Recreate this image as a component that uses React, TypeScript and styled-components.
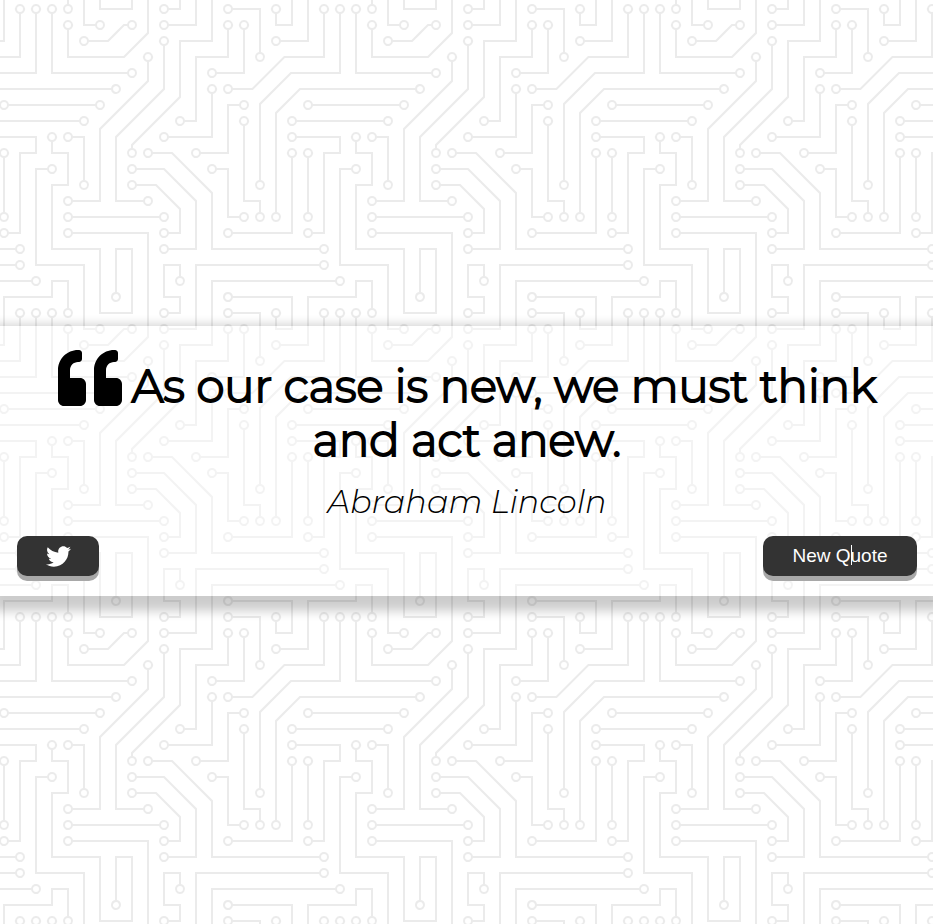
import React from "react";
import styled, { createGlobalStyle } from "styled-components";

const TRACES =
  "M44.1 224a5 5 0 1 1 0 2H0v-2h44.1zm160 48a5 5 0 1 1 0 2H82v-2h122.1zm57.8-46a5 5 0 1 1 0-2H304v2h-42.1zm0 16a5 5 0 1 1 0-2H304v2h-42.1zm6.2-114a5 5 0 1 1 0 2h-86.2a5 5 0 1 1 0-2h86.2zm-256-48a5 5 0 1 1 0 2H0v-2h12.1zm185.8 34a5 5 0 1 1 0-2h86.2a5 5 0 1 1 0 2h-86.2zM258 12.1a5 5 0 1 1-2 0V0h2v12.1zm-64 208a5 5 0 1 1-2 0v-54.2a5 5 0 1 1 2 0v54.2zm48-198.2V80h62v2h-64V21.9a5 5 0 1 1 2 0zm16 16V64h46v2h-48V37.9a5 5 0 1 1 2 0zm-128 96V208h16v12.1a5 5 0 1 1-2 0V210h-16v-76.1a5 5 0 1 1 2 0zm-5.9-21.9a5 5 0 1 1 0 2H114v48H85.9a5 5 0 1 1 0-2H112v-48h12.1zm-6.2 130a5 5 0 1 1 0-2H176v-74.1a5 5 0 1 1 2 0V242h-60.1zm-16-64a5 5 0 1 1 0-2H114v48h10.1a5 5 0 1 1 0 2H112v-48h-10.1zM66 284.1a5 5 0 1 1-2 0V274H50v30h-2v-32h18v12.1zM236.1 176a5 5 0 1 1 0 2H226v94h48v32h-2v-30h-48v-98h12.1zm25.8-30a5 5 0 1 1 0-2H274v44.1a5 5 0 1 1-2 0V146h-10.1zm-64 96a5 5 0 1 1 0-2H208v-80h16v-14h-42.1a5 5 0 1 1 0-2H226v18h-16v80h-12.1zm86.2-210a5 5 0 1 1 0 2H272V0h2v32h10.1zM98 101.9V146H53.9a5 5 0 1 1 0-2H96v-42.1a5 5 0 1 1 2 0zM53.9 34a5 5 0 1 1 0-2H80V0h2v34H53.9zm60.1 3.9V66H82v64H69.9a5 5 0 1 1 0-2H80V64h32V37.9a5 5 0 1 1 2 0zM101.9 82a5 5 0 1 1 0-2H128V37.9a5 5 0 1 1 2 0V82h-28.1zm16-64a5 5 0 1 1 0-2H146v44.1a5 5 0 1 1-2 0V18h-26.1zm102.2 270a5 5 0 1 1 0 2H98v14h-2v-16h124.1zM242 149.9V160h16v34h-16v62h48v48h-2v-46h-48v-66h16v-30h-16v-12.1a5 5 0 1 1 2 0zM53.9 18a5 5 0 1 1 0-2H64V2H48V0h18v18H53.9zm112 32a5 5 0 1 1 0-2H192V0h50v2h-48v48h-28.1zm-48-48a5 5 0 0 1-9.8-2h2.07a3 3 0 1 0 5.66 0H178v34h-18V21.9a5 5 0 1 1 2 0V32h14V2h-58.1zm0 96a5 5 0 1 1 0-2H137l32-32h39V21.9a5 5 0 1 1 2 0V66h-40.17l-32 32H117.9zm28.1 90.1a5 5 0 1 1-2 0v-76.51L175.59 80H224V21.9a5 5 0 1 1 2 0V82h-49.59L146 112.41v75.69zm16 32a5 5 0 1 1-2 0v-99.51L184.59 96H300.1a5 5 0 0 1 3.9-3.9v2.07a3 3 0 0 0 0 5.66v2.07a5 5 0 0 1-3.9-3.9H185.41L162 121.41v98.69zm-144-64a5 5 0 1 1-2 0v-3.51l48-48V48h32V0h2v50H66v55.41l-48 48v2.69zM50 53.9v43.51l-48 48V208h26.1a5 5 0 1 1 0 2H0v-65.41l48-48V53.9a5 5 0 1 1 2 0zm-16 16V89.41l-34 34v-2.82l32-32V69.9a5 5 0 1 1 2 0zM12.1 32a5 5 0 1 1 0 2H9.41L0 43.41V40.6L8.59 32h3.51zm265.8 18a5 5 0 1 1 0-2h18.69l7.41-7.41v2.82L297.41 50H277.9zm-16 160a5 5 0 1 1 0-2H288v-71.41l16-16v2.82l-14 14V210h-28.1zm-208 32a5 5 0 1 1 0-2H64v-22.59L40.59 194H21.9a5 5 0 1 1 0-2H41.41L66 216.59V242H53.9zm150.2 14a5 5 0 1 1 0 2H96v-56.6L56.6 162H37.9a5 5 0 1 1 0-2h19.5L98 200.6V256h106.1zm-150.2 2a5 5 0 1 1 0-2H80v-46.59L48.59 178H21.9a5 5 0 1 1 0-2H49.41L82 208.59V258H53.9zM34 39.8v1.61L9.41 66H0v-2h8.59L32 40.59V0h2v39.8zM2 300.1a5 5 0 0 1 3.9 3.9H3.83A3 3 0 0 0 0 302.17V256h18v48h-2v-46H2v42.1zM34 241v63h-2v-62H0v-2h34v1zM17 18H0v-2h16V0h2v18h-1zm273-2h14v2h-16V0h2v16zm-32 273v15h-2v-14h-14v14h-2v-16h18v1zM0 92.1A5.02 5.02 0 0 1 6 97a5 5 0 0 1-6 4.9v-2.07a3 3 0 1 0 0-5.66V92.1zM80 272h2v32h-2v-32zm37.9 32h-2.07a3 3 0 0 0-5.66 0h-2.07a5 5 0 0 1 9.8 0zM5.9 0A5.02 5.02 0 0 1 0 5.9V3.83A3 3 0 0 0 3.83 0H5.9zm294.2 0h2.07A3 3 0 0 0 304 3.83V5.9a5 5 0 0 1-3.9-5.9zm3.9 300.1v2.07a3 3 0 0 0-1.83 1.83h-2.07a5 5 0 0 1 3.9-3.9z";

// Centres of the solder pads; each one is punched out of the trace shape.
const PADS: Array<[number, number]> = [
  [49, 225], [209, 273], [257, 225], [257, 241], [273, 129], [177, 129], [17, 81],
  [193, 113], [289, 113], [257, 17], [193, 225], [193, 161], [241, 17], [257, 33],
  [129, 129], [145, 225], [129, 113], [81, 161], [113, 241], [177, 161], [97, 177],
  [129, 225], [65, 289], [241, 177], [257, 145], [273, 193], [193, 241], [177, 145],
  [289, 33], [97, 97], [49, 145], [49, 33], [113, 33], [65, 129], [97, 81], [129, 33],
  [113, 17], [145, 65], [225, 289], [241, 145], [49, 17], [161, 49], [161, 17],
  [113, 97], [209, 17], [145, 193], [225, 17], [161, 225], [17, 161], [49, 49],
  [33, 209], [33, 65], [17, 33], [273, 49], [257, 209], [49, 241], [17, 193],
  [209, 257], [33, 161], [49, 257], [17, 177],
];

const holes = PADS.map(([x, y]) => `M${x} ${y + 3}a3 3 0 1 0 0-6 3 3 0 0 0 0 6z`).join("");

const circuit = encodeURIComponent(
  `<svg xmlns="http://www.w3.org/2000/svg" width="304" height="304" viewBox="0 0 304 304"><path fill="#000" fill-opacity="0.08" d="${TRACES}${holes}"/></svg>`
);

const GlobalStyle = createGlobalStyle`
  * {
    box-sizing: border-box;
  }

  body {
    margin: 0;
    background: #fff url("data:image/svg+xml,${circuit}") -189px -8px;
  }
`;

const Page = styled.main`
  display: flex;
  align-items: center;
  min-height: 100vh;
  padding-bottom: 2px;
  font-family: Montserrat, Inter, sans-serif;
  color: #000;
`;

const QuoteBox = styled.section`
  width: 100%;
  padding: 20px 16px 20px 17px;
  background: rgba(255, 255, 255, 0.4);
  box-shadow: 0 7px 10px 8px rgba(0, 0, 0, 0.2);
  text-align: center;
`;

const QuoteText = styled.h1`
  margin: 0 32px;
  font-size: 45px;
  font-weight: 300;
  line-height: 54px;
  -webkit-text-stroke: 2px #000;
`;

const QuoteMark = styled.svg`
  width: 64px;
  height: 64px;
  margin-right: 10px;
  vertical-align: -8px;
`;

const Author = styled.p`
  margin: 15px 0 14px;
  font-size: 32px;
  font-style: italic;
  font-weight: 300;
  line-height: 40px;
`;

const Actions = styled.div`
  display: flex;
  justify-content: space-between;
`;

const Button = styled.button<{ $wide?: boolean }>`
  display: flex;
  align-items: center;
  justify-content: center;
  width: ${({ $wide }) => ($wide ? "154px" : "82px")};
  height: 40px;
  padding: 0;
  border: 0;
  border-radius: 10px;
  background: #333;
  box-shadow: 0 5px #a8a8a8;
  color: #fff;
  font: 19px "Liberation Sans", Arial, sans-serif;
  cursor: pointer;
`;

const Caret = styled.span`
  position: absolute;
  width: 1px;
  height: 20px;
  background: #fff;
`;

const Bird = styled.svg`
  width: 25px;
  height: 25px;
`;

export default function App() {
  return (
    <>
      <GlobalStyle />
      <Page>
        <QuoteBox>
          <QuoteText>
            <QuoteMark viewBox="0 0 512 512" aria-hidden="true">
              <path d="M464 256h-80v-64c0-35.300 28.700-64 64-64h8c13.300 0 24-10.700 24-24V56c0-13.300-10.700-24-24-24h-8c-88.400 0-160 71.600-160 160v240c0 26.500 21.500 48 48 48h128c26.500 0 48-21.500 48-48V304c0-26.500-21.500-48-48-48zm-288 0H96v-64c0-35.300 28.700-64 64-64h8c13.300 0 24-10.700 24-24V56c0-13.300-10.700-24-24-24h-8C71.600 32 0 103.600 0 192v240c0 26.500 21.500 48 48 48h128c26.500 0 48-21.500 48-48V304c0-26.500-21.500-48-48-48z" />
            </QuoteMark>
            As our case is new, we must think and act anew.
          </QuoteText>
          <Author>Abraham Lincoln</Author>
          <Actions>
            <Button type="button" aria-label="Tweet this quote">
              <Bird viewBox="0 0 512 512" fill="currentColor" aria-hidden="true">
                <path d="M459.370 151.716c.325 4.548.325 9.097.325 13.645 0 138.720-105.583 298.558-298.558 298.558-59.452 0-114.680-17.219-161.137-47.106 8.447.974 16.568 1.299 25.340 1.299 49.055 0 94.213-16.568 130.274-44.832-46.132-.975-84.792-31.188-98.112-72.772 6.498.974 12.995 1.624 19.818 1.624 9.421 0 18.843-1.300 27.614-3.573-48.081-9.747-84.143-51.980-84.143-102.985v-1.299c13.969 7.797 30.214 12.670 47.431 13.319-28.264-18.843-46.781-51.005-46.781-87.391 0-19.492 5.197-37.360 14.294-52.954 51.655 63.675 129.300 105.258 216.365 109.807-1.624-7.797-2.599-15.918-2.599-24.040 0-57.828 46.782-104.934 104.934-104.934 30.213 0 57.502 12.670 76.670 33.137 23.715-4.548 46.456-13.320 66.599-25.340-7.798 24.366-24.366 44.833-46.132 57.827 21.117-2.273 41.584-8.122 60.426-16.243-14.292 20.791-32.161 39.308-52.628 54.253z" />
              </Bird>
            </Button>
            <Button type="button" $wide>
              <span>New Q<Caret />uote</span>
            </Button>
          </Actions>
        </QuoteBox>
      </Page>
    </>
  );
}
